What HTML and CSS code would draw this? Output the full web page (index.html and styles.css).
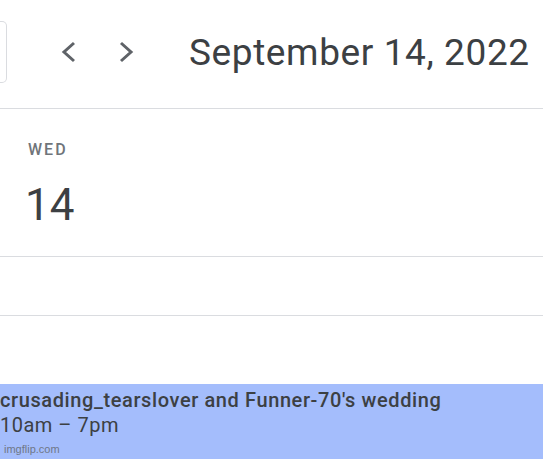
FILE: index.html
```html
<!DOCTYPE html>
<html lang="en">
<head>
    <meta charset="UTF-8">
    <meta name="viewport" content="width=device-width, initial-scale=1.0">
    <title>Calendar - Day</title>
    <link rel="stylesheet" href="styles.css">
</head>
<body>
    <div class="header">
        <div class="today-btn"></div>
        <div class="nav">
            <button class="nav-btn" aria-label="Previous day">
                <svg width="16" height="22" viewBox="0 0 16 22"><polyline points="13,2 3,11 13,20" /></svg>
            </button>
            <button class="nav-btn" aria-label="Next day">
                <svg width="16" height="22" viewBox="0 0 16 22"><polyline points="3,2 13,11 3,20" /></svg>
            </button>
        </div>
        <h1 class="title">September 14, 2022</h1>
    </div>

    <div class="day">
        <div class="weekday">WED</div>
        <div class="date">14</div>
    </div>

    <div class="allday"></div>

    <div class="grid">
        <div class="event">
            <div class="event-title">crusading_tearslover and Funner-70's wedding</div>
            <div class="event-time">10am – 7pm</div>
            <div class="watermark">imgflip.com</div>
        </div>
    </div>
</body>
</html>
```

FILE: styles.css
```css
body {
    margin: 0;
    font-family: Roboto, "Noto Sans", Arial, sans-serif;
    background: #fff;
    color: #3c4043;
    overflow: hidden;
}
.header {
    height: 109px;
    border-bottom: 1px solid #dadce0;
    display: flex;
    align-items: center;
    padding-bottom: 4px;
    box-sizing: border-box;
}
.today-btn {
    width: 6px;
    height: 60px;
    border: 1px solid #dadce0;
    border-left: none;
    border-radius: 0 5px 5px 0;
}
.nav {
    display: flex;
    gap: 17px;
    margin-left: 42px;
}
.nav-btn {
    width: 40px;
    height: 40px;
    padding: 0;
    border: none;
    background: none;
    display: flex;
    align-items: center;
    justify-content: center;
}
.nav-btn polyline {
    fill: none;
    stroke: #5f6368;
    stroke-width: 3;
}
.title {
    margin: 0 0 0 43px;
    font-size: 37px;
    font-weight: 400;
    color: #3c4043;
    letter-spacing: 0.6px;
}
.day {
    height: 148px;
    border-bottom: 1px solid #dadce0;
    padding: 31px 0 0 28px;
    box-sizing: border-box;
}
.weekday {
    font-size: 16px;
    line-height: 20px;
    font-weight: 500;
    letter-spacing: 2px;
    color: #70757a;
}
.date {
    margin: 20px 0 0 -3px;
    font-size: 44px;
    line-height: 50px;
    color: #3c4043;
}
.allday {
    height: 59px;
    border-bottom: 1px solid #dadce0;
    box-sizing: border-box;
}
.grid {
    padding-top: 68px;
}
.event {
    background: #a4bdfc;
    height: 75px;
    padding-top: 4px;
    box-sizing: border-box;
}
.event-title {
    font-size: 20px;
    line-height: 25px;
    font-weight: 500;
    letter-spacing: 0.6px;
}
.event-time {
    font-size: 20px;
    line-height: 25px;
    letter-spacing: 0.5px;
}
.watermark {
    margin: 4px 0 0 4px;
    font-family: "Liberation Sans", Arial, sans-serif;
    font-size: 11px;
    line-height: 14px;
    color: #6f7788;
}
```
